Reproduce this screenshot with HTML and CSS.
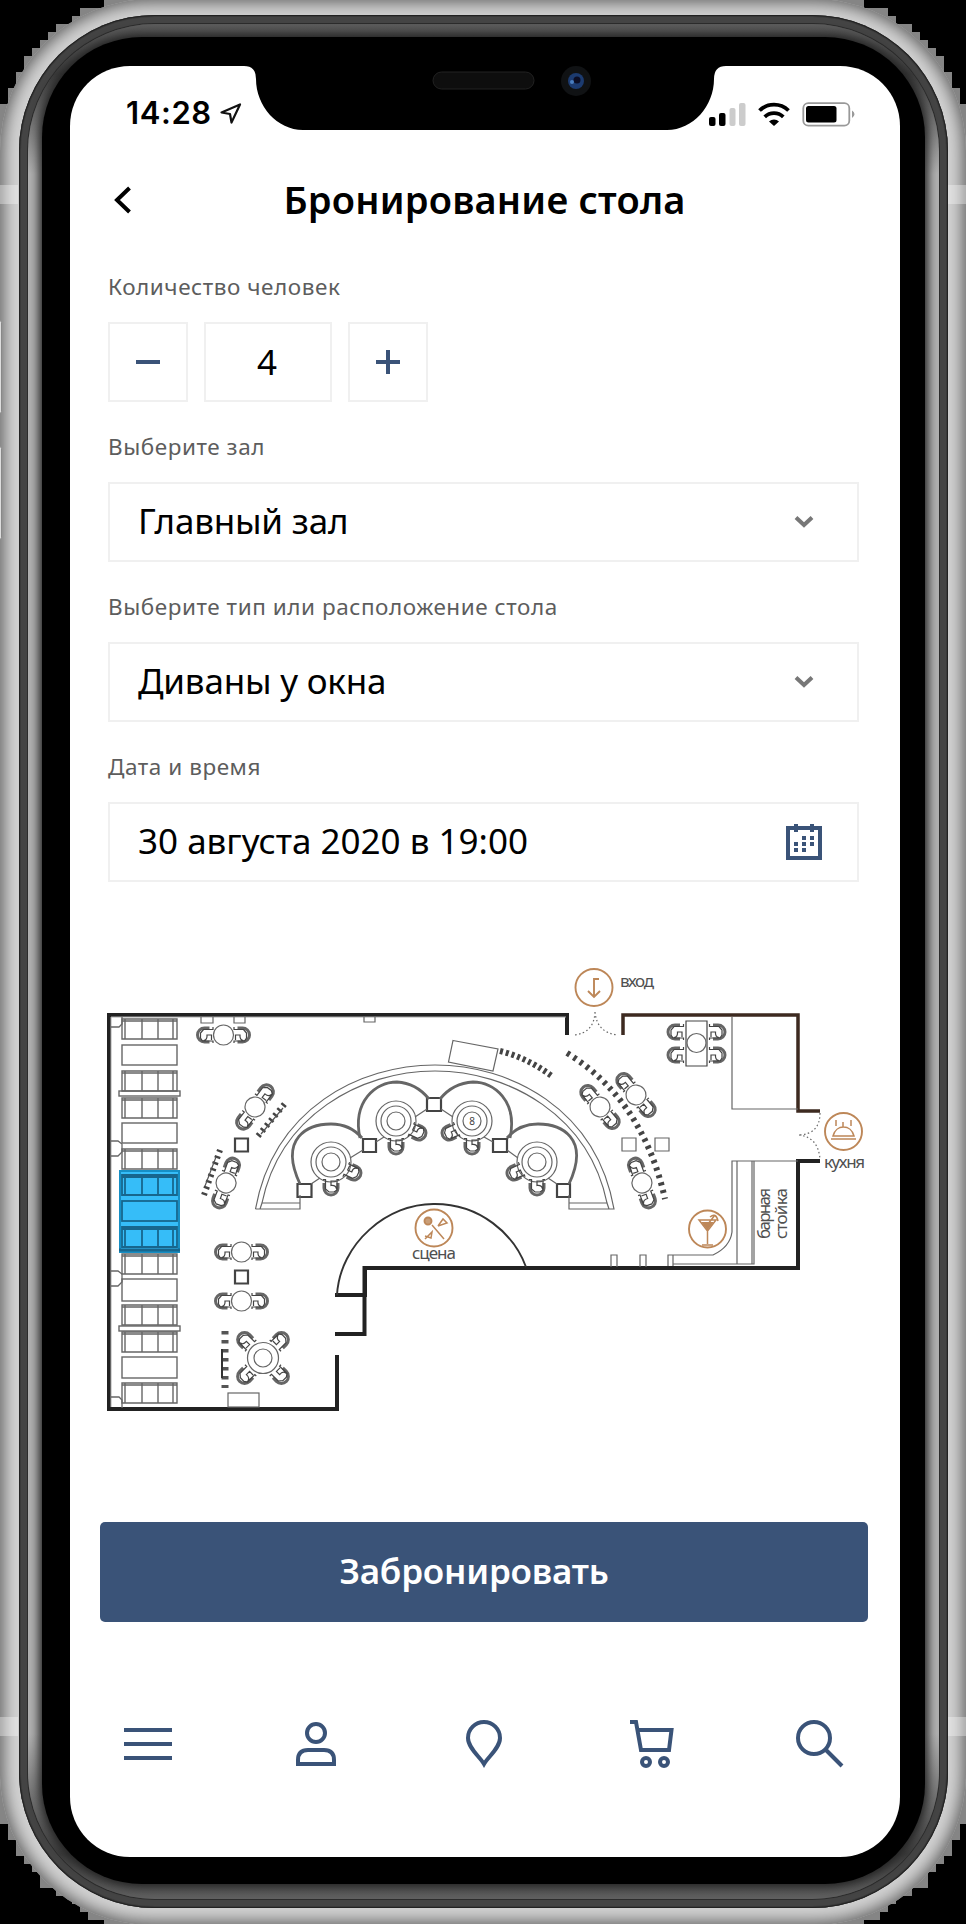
FILE: index.html
```html
<!DOCTYPE html>
<html lang="ru">
<head>
<meta charset="utf-8">
<title>Бронирование стола</title>
<link rel="stylesheet" href="styles.css">
</head>
<body>
<div class="edge"></div>
<div class="phone">
  <div class="rim"><div class="glass"><div class="bezel">
    <main class="screen">
      <div class="status">
        <span class="clock">14:28</span>
        <svg class="loc" width="24" height="24" viewBox="0 0 24 24"><path d="M2.500 10.500 21 2.500 12.500 20.500 11 12Z" fill="none" stroke="#111" stroke-width="2.200" stroke-linejoin="round"/></svg>
        <svg class="signals" width="150" height="28" viewBox="0 0 150 28">
          <rect x="1" y="16" width="6.500" height="9" rx="2"/><rect x="11" y="12" width="6.500" height="13" rx="2"/>
          <g fill="#ccc"><rect x="21.500" y="7" width="6" height="18" rx="2"/><rect x="31" y="2" width="6.500" height="23" rx="2"/></g>
          <path d="M66 25 61 20.500A7.500 7.500 0 0 1 71 20.500Z"/>
          <g fill="none" stroke="#000" stroke-width="3.800"><path d="M56.700 15.800A13.500 13.500 0 0 1 75.300 15.800"/><path d="M51.500 9.500A21 21 0 0 1 80.500 9.500"/></g>
          <rect x="95.300" y="2.200" width="46" height="22.500" rx="5" fill="none" stroke="#999" stroke-width="1.800"/>
          <rect x="98" y="5" width="30.500" height="16.500" rx="2.500"/><path d="M144 9.500Q149 13 144 17Z" fill="#999"/>
        </svg>
      </div>
      <header class="head">
        <svg width="18" height="28" viewBox="0 0 18 28"><path d="M15.500 2 3 14 15.500 26" fill="none" stroke="#000" stroke-width="4"/></svg>
        <h1>Бронирование стола</h1>
      </header>
      <section class="form">
        <div class="label l1">Количество человек</div>
        <div class="counter">
          <button class="box step"><svg width="24" height="24"><path d="M0 12H24" stroke="#3a5378" stroke-width="4"/></svg></button>
          <div class="box count">4</div>
          <button class="box step"><svg width="24" height="24"><path d="M0 12H24M12 0V24" stroke="#3a5378" stroke-width="4"/></svg></button>
        </div>
        <div class="label">Выберите зал</div>
        <div class="box field"><span class="tight">Главный зал</span><svg class="chev" width="20" height="14"><path d="M2 2.500 10 10 18 2.500" fill="none" stroke="#777" stroke-width="4"/></svg></div>
        <div class="label">Выберите тип или расположение стола</div>
        <div class="box field"><span class="tight">Диваны у окна</span><svg class="chev" width="20" height="14"><path d="M2 2.500 10 10 18 2.500" fill="none" stroke="#777" stroke-width="4"/></svg></div>
        <div class="label">Дата и время</div>
        <div class="box field"><span>30 августа 2020 в 19:00</span>
          <svg class="cal" width="36" height="36" fill="#3a5378"><path d="M2 4H34V34H2Z" fill="none" stroke="#3a5378" stroke-width="4"/><path d="M8 0h4v8H8zM24 0h4v8h-4zM16 12h4v4h-4zM24 12h4v4h-4zM8 18h4v4H8zM16 18h4v4h-4zM24 18h4v4h-4zM8 24h4v4H8zM16 24h4v4h-4z"/></svg>
        </div>
      </section>
      <svg class="plan" width="800" height="470" viewBox="90 950 800 470" fill="none" stroke="#666" stroke-width="1.200">
        <defs>
          <g id="chair"><path d="M5-7H0A7 7 0 0 0 0 7H5" stroke="#666" stroke-width="3"/><path d="M8.500-8V-5.500H-1L-4-2V3L-2 6H8.500V8M-1 5.500Q3 5 2.500 0H7V5" stroke="#444"/></g>
          <g id="pair"><circle r="10"/><use href="#chair" x="-19"/><use href="#chair" transform="translate(19 0)scale(-1 1)"/></g>
          <g id="sofa"><path d="M0 0H55V20H0ZM3 0V20M20 0V20M36 0V20M51 0V20M0 2H55" /></g>
          <g id="booth"><circle r="20"/><circle r="15"/><circle r="9"/><use href="#chair" transform="translate(0 26)rotate(-90)"/></g>
        </defs>
        <g stroke="#222" stroke-width="4">
          <path d="M567 1035V1015H109V1409H337V1355"/>
          <path d="M335 1334H364.500V1268H798V1161H820"/>
          <path d="M335 1295H365V1270" />
          <path d="M623 1035V1015H798V1111H820" stroke="#3d2a20" stroke-width="3.500"/>
        </g>
        <path d="M111 1017H566M111 1017V1407" stroke="#aaa" stroke-width="1"/>
        <g stroke-width="1.300">
          <path d="M111 1027H119L122 1024V1017M111 1141H118L122 1144V1152L118 1156H111M111 1271H118L122 1274V1282L118 1286H111M111 1397H119L122 1400V1408"/>
        </g>
        <rect x="120" y="1171" width="59" height="81" fill="#36bdf8" stroke="#168fc5" stroke-width="2"/>
        <g stroke="#666" stroke-width="1.400">
          <use href="#sofa" x="122" y="1019"/><rect x="122" y="1045" width="55" height="20"/><use href="#sofa" x="122" y="1071"/>
          <rect x="119" y="1091" width="61" height="5"/>
          <use href="#sofa" x="122" y="1098"/><rect x="122" y="1123" width="55" height="20"/><use href="#sofa" x="122" y="1149"/>
          <use href="#sofa" x="122" y="1254"/><rect x="122" y="1279" width="55" height="22"/><use href="#sofa" x="122" y="1305"/>
          <rect x="119" y="1326" width="61" height="5"/>
          <use href="#sofa" x="122" y="1332"/><rect x="122" y="1357" width="55" height="21"/><use href="#sofa" x="122" y="1383"/>
        </g>
        <g stroke="#17668d" stroke-width="1.800"><use href="#sofa" x="122" y="1175"/><rect x="122" y="1201" width="55" height="20"/><use href="#sofa" x="122" y="1227"/><path d="M119 1250H180" stroke-width="3"/></g>

        <path d="M201 1017V1023H213V1017M234 1017V1023H245V1017M364 1017V1022H375V1017"/>
        <use href="#pair" x="223.500" y="1035"/><use href="#pair" x="241.500" y="1252"/><use href="#pair" x="241.500" y="1301"/>
        <use href="#pair" transform="translate(255 1107)rotate(-53)"/><use href="#pair" transform="translate(226 1183)rotate(-70)"/>
        <use href="#pair" transform="translate(600 1107)rotate(50)"/><use href="#pair" transform="translate(636 1095)rotate(50)"/><use href="#pair" transform="translate(642 1183)rotate(70)"/>
        <g stroke="#444" stroke-width="2.200"><path d="M235 1138.500h13v13h-13zM235 1270.500h13v13h-13zM297.500 1184h14v13h-14zM363 1139h13v13h-13zM427 1098h14v13h-14zM493 1139h14v13h-14zM557 1184h13v13h-13z"/></g>
        <path d="M622 1138h14v13h-14zM655 1138h14v13h-14z"/>
        <g stroke="#444" stroke-width="6" stroke-dasharray="2.500 4"><path d="M258 1136 287 1101"/><path d="M204 1195 220 1150"/></g>
        <path d="M261 1134 283 1108M205 1186 216 1157" stroke="#555"/>
        <path d="M500 1051Q528 1058 553 1077" stroke="#444" stroke-width="6" stroke-dasharray="3 3"/>
        <path d="M567 1053Q643 1100 665 1199" stroke="#444" stroke-width="6" stroke-dasharray="3.200 4.600"/>
        <path d="M225 1331V1388" stroke="#555" stroke-width="7" stroke-dasharray="3.500 5.500"/><path d="M222 1349V1378" stroke="#333" stroke-width="2"/>
        <g transform="translate(263 1358)"><circle r="15.500"/><circle r="9"/>
          <use href="#chair" transform="rotate(45)translate(-26 0)"/><use href="#chair" transform="rotate(135)translate(-26 0)"/><use href="#chair" transform="rotate(225)translate(-26 0)"/><use href="#chair" transform="rotate(315)translate(-26 0)"/>
        </g>
        <rect x="228" y="1393" width="31" height="14"/>

        <path d="M255.500 1209C274 1108 360 1065 435 1065S596 1108 614 1209H569V1203H607C589 1116 510 1071 435 1071S280 1116 262 1203H300V1209H255.500M300 1203V1195M569 1203V1195M262 1203L260 1209M607 1203L609 1209"/>
        <g stroke="#666" stroke-width="2.800"><path d="M300 1184C278 1137 309 1124 331 1124Q350 1124 362 1138"/><path d="M569 1184C591 1137 560 1124 538 1124Q519 1124 507 1138"/><path d="M360 1138C352 1101 376 1082 397 1082Q416 1083 429 1099"/><path d="M510 1138C518 1101 494 1082 473 1082Q453 1083 440 1099"/></g>
        <use href="#booth" x="331" y="1162"/><use href="#booth" x="396" y="1121"/><use href="#booth" x="472" y="1121"/><use href="#booth" x="537" y="1162"/>
        <use href="#chair" transform="translate(354 1173)rotate(-155)"/><use href="#chair" transform="translate(419 1133)rotate(-155)"/><use href="#chair" transform="translate(449 1133)rotate(-25)"/><use href="#chair" transform="translate(514 1173)rotate(-25)"/>
        <path d="M311 1184 320 1178M350 1158 363 1150M376 1142 384 1137M415 1117 427 1109M441 1109 453 1117M484 1137 493 1142M507 1150 518 1158M548 1178 557 1184"/>
        <text x="472" y="1125" class="tiny">8</text>
        <path d="M453 1040.500 498 1049 493 1071 448.500 1062Z"/>
        <path d="M337 1295C340 1243 388 1203 435 1204C480 1204 514 1234 526 1267" stroke="#333" stroke-width="1.900"/>

        <path d="M686 1021h21v45h-21z" stroke="#444"/><circle cx="696.500" cy="1043" r="9.500"/>
        <use href="#chair" x="675" y="1032"/><use href="#chair" x="675" y="1055"/><use href="#chair" transform="translate(718 1032)scale(-1 1)"/><use href="#chair" transform="translate(718 1055)scale(-1 1)"/>
        <path d="M732 1017V1109H798M798 1161H732V1232Q730 1247 713 1255H668V1266M737 1161V1264M752 1161V1264M754 1161V1264H673M673 1255V1266M611 1267V1255H617V1267M640 1267V1255H646V1267"/>
        <g stroke-dasharray="1.500 2.500"><path d="M595 1012Q594 1033 574 1035M595 1012Q597 1033 618 1035M820 1113Q820 1134 799 1135M799 1135Q818 1137 820 1159"/></g>

        <g stroke="#bd8758" stroke-width="1.900">
          <circle cx="594" cy="987.500" r="18.500"/><path d="M599 979H594V997M588 991 594 997 600 991"/>
          <circle cx="843.500" cy="1131.500" r="18.500"/><path d="M831 1139H856M833 1136C836 1124 851 1124 854 1136ZM836 1120V1126M851 1120V1126M843 1122V1127" stroke-width="1.500"/>
          <circle cx="434" cy="1228" r="18.500"/><path d="M432 1225 444 1239M425 1239 432 1232 431 1238 425 1236M438 1226 443 1219 447 1223 438 1226" stroke-width="1.500"/><circle cx="428" cy="1221" r="3.500" fill="#c99e78"/>
          <circle cx="707.500" cy="1229" r="18.500"/><path d="M699 1220H716L707.500 1231ZM707.500 1231V1244M702 1245H713M708 1224 715 1215M710 1217Q716 1212 718 1221" stroke-width="1.500"/><path d="M703 1223H712L707.500 1229Z" fill="#bd8758"/>
        </g>
        <g class="names">
          <text x="620" y="987" textLength="34">вход</text><text x="824" y="1168" textLength="41">кухня</text><text x="412" y="1259" textLength="44">сцена</text>
          <text transform="translate(770 1239)rotate(-90)" textLength="51">барная</text><text transform="translate(787 1239)rotate(-90)" textLength="51">стойка</text>
        </g>
      </svg>
      <button class="book">Забронировать</button>
      <nav class="tabs">
        <svg width="48" height="48" viewBox="124 1720 48 48"><path d="M124 1730H172M124 1744H172M124 1758H172"/></svg>
        <svg width="48" height="48" viewBox="292 1720 48 48"><circle cx="316" cy="1733" r="9"/><path d="M298 1764V1760Q298 1750 308 1750H324Q334 1750 334 1760V1764Z"/></svg>
        <svg width="48" height="48" viewBox="460 1720 48 48"><path d="M484 1764C480 1757 468 1748 468 1738A16 16 0 0 1 500 1738C500 1748 488 1757 484 1764Z"/></svg>
        <svg width="48" height="48" viewBox="628 1720 48 48"><path d="M630 1722H636L641 1750H669L671.500 1730H638"/><circle cx="646" cy="1762" r="4"/><circle cx="664" cy="1762" r="4"/></svg>
        <svg width="48" height="48" viewBox="796 1720 48 48"><circle cx="814" cy="1738" r="16"/><path d="M825.500 1749.500 842 1766"/></svg>
      </nav>
    </main>
  </div></div></div>
</div>
<svg class="notch" width="482" height="80" viewBox="244 52 482 80">
  <path d="M244 60V66Q256 66 256 79C256 106 277 130 303 130H667C693 130 714 106 714 79Q714 66 726 66V60Z" fill="#000"/>
  <rect x="433" y="72" width="101" height="17" rx="8.500" fill="#0e0e0e" stroke="#222"/>
  <circle cx="576" cy="81" r="15" fill="#101214"/><circle cx="576" cy="81" r="8" fill="#1c3b70"/><circle cx="577" cy="80" r="3.500" fill="#0b0d24"/><circle cx="572" cy="82" r="2" fill="#4a7ec0"/>
</svg>
<div class="band b1"></div><div class="band b2"></div><div class="band b3"></div><div class="band b4"></div>
<div class="side s1"></div><div class="side s2"></div>
</body>
</html>
```
FILE: styles.css
```css
* { box-sizing: border-box; }
body { margin: 0; width: 966px; height: 1924px; overflow: hidden; background: #000; position: relative; font-family: "Noto Sans", "Open Sans", sans-serif; color: #000; }
svg { display: block; flex: none; }
button { border: 0; padding: 0; font: inherit; }

/* stepped silhouette behind the rounded case */
.edge { position: absolute; inset: 0; background: #858585; clip-path: polygon(104px 0,104px 8px,80px 8px,80px 16px,72px 16px,72px 24px,56px 24px,56px 32px,48px 32px,48px 40px,40px 40px,40px 48px,32px 48px,32px 56px,24px 56px,24px 72px,16px 72px,16px 88px,8px 88px,8px 104px,0 104px,0 1824px,8px 1824px,8px 1840px,16px 1840px,16px 1856px,24px 1856px,24px 1864px,32px 1864px,32px 1872px,40px 1872px,40px 1888px,56px 1888px,56px 1896px,72px 1896px,72px 1904px,80px 1904px,80px 1912px,88px 1912px,88px 1920px,104px 1920px,104px 1924px,864px 1924px,864px 1920px,880px 1920px,880px 1912px,888px 1912px,888px 1904px,896px 1904px,896px 1896px,912px 1896px,912px 1888px,928px 1888px,928px 1872px,936px 1872px,936px 1864px,944px 1864px,944px 1856px,952px 1856px,952px 1840px,960px 1840px,960px 1824px,966px 1824px,966px 104px,960px 104px,960px 88px,952px 88px,952px 72px,944px 72px,944px 56px,936px 56px,936px 48px,928px 48px,928px 40px,920px 40px,920px 32px,912px 32px,912px 24px,896px 24px,896px 16px,888px 16px,888px 8px,864px 8px,864px 0); }
.phone { position: relative; height: 1926px; margin: -1px 0 0; padding: 16px 18px 17px 19px; border-radius: 152px; background: #d2d2d2; box-shadow: inset 0 0 16px 3px #5c5c5c; }
.rim { height: 100%; padding: 9px; border-radius: 136px; background: #444; box-shadow: inset 0 0 0 1px #222, inset 0 0 0 2px #3a3a3a; }
.glass { height: 100%; padding: 13px 14px 15px; border-radius: 127px; background: linear-gradient(#5c5c5c, #3c3c3c 50px, #b0b0b0 150px, #b0b0b0 1710px, #3c3c3c 1830px, #606060); box-shadow: 0 0 0 1px #2c2c2c; }
.bezel { height: 100%; padding: 29px 25px 29px 28px; border-radius: 100px; background: #000; box-shadow: 0 0 10px 3px #222; }
.screen { height: 1791px; border-radius: 60px; background: #fff; display: flex; flex-direction: column; overflow: hidden; }

.status { height: 94px; padding: 28px 42px 0 56px; display: flex; align-items: flex-start; flex: none; }
.clock { font: 600 31px/38px Inter, sans-serif; width: 93px; letter-spacing: 0.600px; }
.loc { margin-top: 8px; }
.signals { margin: 7px 0 0 auto; }
.head { height: 80px; display: flex; align-items: center; padding-left: 44px; flex: none; }
h1 { margin: -2px 0 0 151.500px; font-size: 38px; line-height: 80px; font-weight: 600; white-space: nowrap; letter-spacing: 0.200px; }
.form { padding: 22px 41px 0 38px; flex: none; }
.label { height: 80px; padding-top: 28px; font-size: 22.500px; line-height: 34px; color: #5d5d5d; white-space: nowrap; letter-spacing: 0.550px; }
.label.l1 { height: 60px; padding-top: 8px; }
.box { height: 80px; border: 2px solid #f0f0f0; background: #fff; display: flex; align-items: center; }
.counter { display: flex; gap: 16px; }
.step { width: 80px; justify-content: center; }
.count { width: 128px; justify-content: center; font-size: 35px; padding: 0 2px 2px 0; }
.field { padding: 0 35px 0 28px; justify-content: space-between; font-size: 35px; white-space: nowrap; }
.field span { margin-top: -3px; }
.tight { letter-spacing: -0.200px; }
.chev { margin-right: 8px; }
.plan { margin: 68px 0 0 20px; flex: none; }
.names text { fill: #505050; stroke: none; font-size: 17px; }
.tiny { fill: #444; stroke: none; font: 10px "Noto Sans", sans-serif; text-anchor: middle; }
.book { width: 768px; height: 100px; margin: 102px 0 0 30px; padding: 0 20px 3px 0; border-radius: 5px; background: #3a5378; color: #fff; font-size: 35px; font-weight: 600; letter-spacing: -0.200px; flex: none; }
.tabs { display: flex; justify-content: space-between; padding: 98px 56px 0 54px; }
.tabs svg { fill: none; stroke: #3a5378; stroke-width: 4; }

.notch { position: absolute; left: 244px; top: 52px; }
.band { position: absolute; width: 18px; height: 19px; background: #ffffff55; }
.b1 { left: 0; top: 185px; }
.b2 { right: 0; top: 185px; }
.b3 { left: 0; top: 1717px; }
.b4 { right: 0; top: 1717px; }
.side { position: absolute; left: -3px; width: 5px; height: 94px; border-radius: 3px; background: #ddd; border: 1px solid #888; }
.s1 { top: 320px; }
.s2 { top: 446px; }
```
